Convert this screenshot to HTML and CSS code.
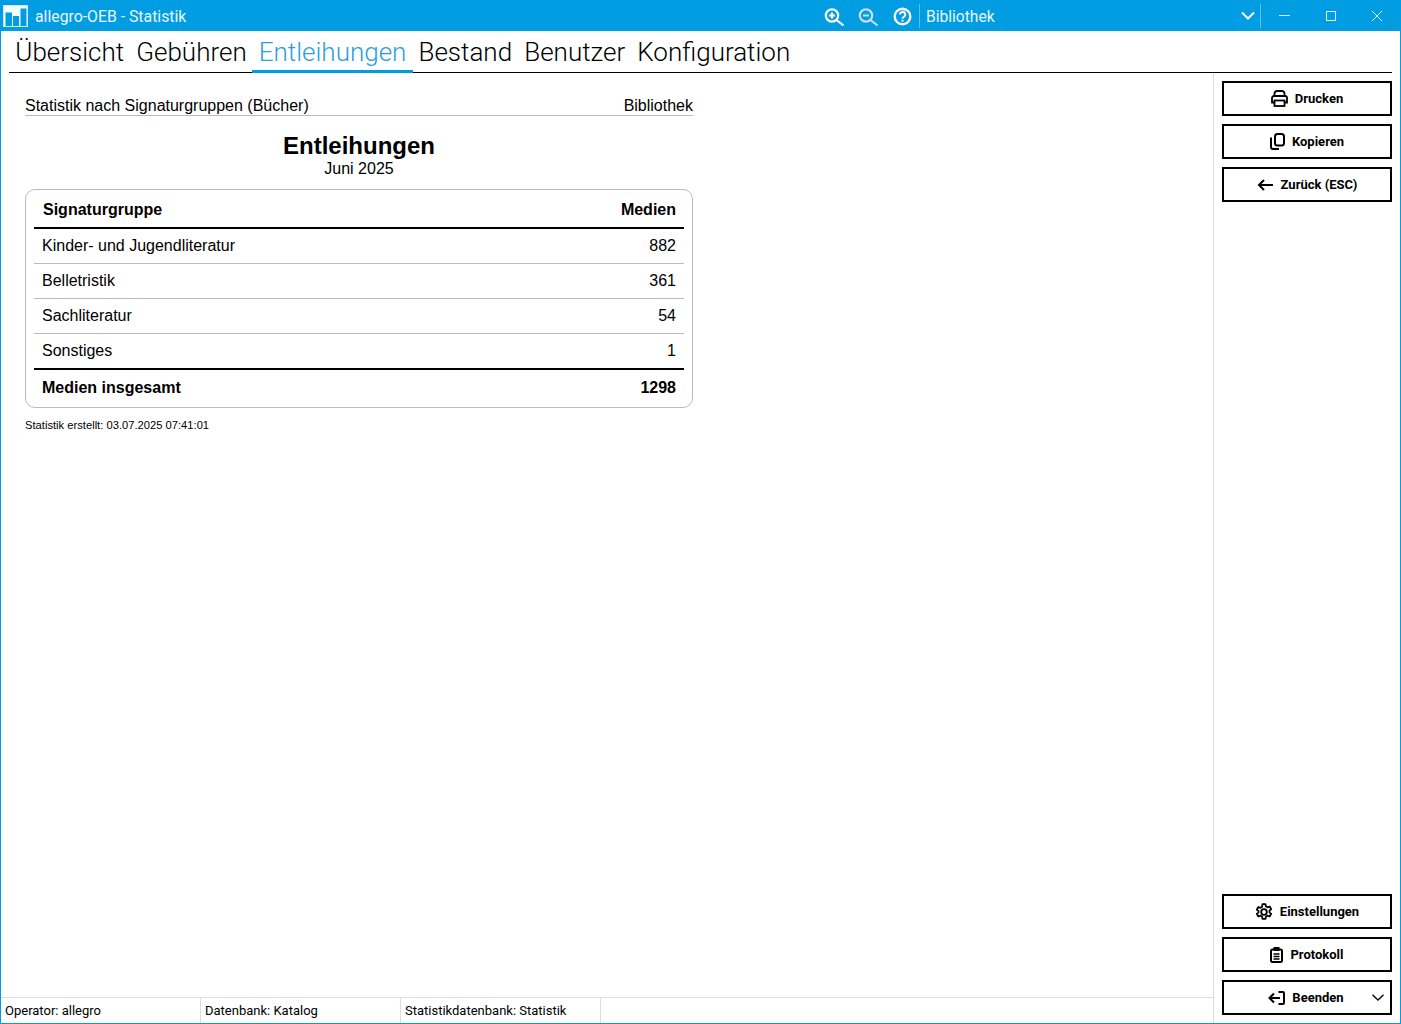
FILE: index.html
```html
<!DOCTYPE html>
<html lang="de">
<head>
  <meta charset="UTF-8">
  <title>allegro-OEB - Statistik</title>
  <link rel="stylesheet" href="styles.css">
</head>
<body>
  <div class="window">
    <!-- Titelleiste -->
    <header class="titlebar">
      <svg class="app-logo" width="26" height="23" viewBox="0 0 26 23">
        <rect x="0.500" y="0.500" width="24" height="21" fill="#f4fbfe" stroke="#cfeaf8"/>
        <rect x="2.500" y="7.500" width="6.500" height="13.500" fill="#009de2"/>
        <rect x="10" y="11" width="6" height="10" fill="#009de2"/>
        <rect x="17.500" y="3.500" width="6" height="17.500" fill="#009de2"/>
      </svg>
      <span class="app-title">allegro-OEB - Statistik</span>
      <div class="title-tools">
        <svg class="tool" width="22" height="22" viewBox="0 0 22 22" fill="none" stroke="#fff" stroke-width="2.200">
          <circle cx="8" cy="10.500" r="6.200"/><path d="M12.500 15l7 5.500M8 7.500v6M5 10.500h6"/>
        </svg>
        <svg class="tool" width="22" height="22" viewBox="0 0 22 22" fill="none" stroke="#cfdde4" stroke-width="2.200">
          <circle cx="8" cy="10.500" r="6.200"/><path d="M12.500 15l7 5.500M5 10.500h6"/>
        </svg>
        <svg class="tool" width="22" height="22" viewBox="0 0 22 22" fill="none" stroke="#fff" stroke-width="2.400">
          <circle cx="10.500" cy="11.500" r="7.800"/><path d="M8 9.500a2.600 2.600 0 1 1 3.800 2.300c-.9.500-1.300 1-1.300 1.900" stroke-width="2"/><path d="M10.500 14.800v1.800" stroke-width="2"/>
        </svg>
      </div>
      <div class="db-select">
        <span>Bibliothek</span>
        <svg width="14" height="9" viewBox="0 0 14 9" fill="none" stroke="#fff" stroke-width="2"><path d="M1 1.500l6 6 6-6"/></svg>
      </div>
      <div class="win-controls">
        <svg width="46" height="31" viewBox="0 0 46 31" fill="none" stroke="#d5eefa"><path d="M17 15.500h11"/></svg>
        <svg width="46" height="31" viewBox="0 0 46 31" fill="none" stroke="#e6f5fc"><rect x="18.500" y="11.500" width="9" height="9"/></svg>
        <svg width="46" height="31" viewBox="0 0 46 31" fill="none" stroke="#e6f5fc"><path d="M18 11l10 10M28 11 18 21"/></svg>
      </div>
    </header>

    <nav class="tabs">
      <a class="tab">Übersicht</a>
      <a class="tab">Gebühren</a>
      <a class="tab active">Entleihungen</a>
      <a class="tab">Bestand</a>
      <a class="tab">Benutzer</a>
      <a class="tab">Konfiguration</a>
    </nav>

    <div class="body">
      <div class="main">
        <section class="report">
          <div class="report-head">
            <span>Statistik nach Signaturgruppen (Bücher)</span>
            <span>Bibliothek</span>
          </div>
          <h1>Entleihungen</h1>
          <div class="period">Juni 2025</div>
          <div class="table-box">
            <table>
              <thead>
                <tr><th>Signaturgruppe</th><th class="num">Medien</th></tr>
              </thead>
              <tbody>
                <tr><td>Kinder- und Jugendliteratur</td><td class="num">882</td></tr>
                <tr><td>Belletristik</td><td class="num">361</td></tr>
                <tr><td>Sachliteratur</td><td class="num">54</td></tr>
                <tr><td>Sonstiges</td><td class="num">1</td></tr>
              </tbody>
              <tfoot>
                <tr><td>Medien insgesamt</td><td class="num">1298</td></tr>
              </tfoot>
            </table>
          </div>
          <div class="created">Statistik erstellt: 03.07.2025 07:41:01</div>
        </section>

        <footer class="statusbar">
          <div class="status-cell">Operator: allegro</div>
          <div class="status-cell">Datenbank: Katalog</div>
          <div class="status-cell">Statistikdatenbank: Statistik</div>
        </footer>
      </div>

      <aside class="sidebar">
        <div class="btn-group">
          <button class="btn">
            <svg width="17" height="17" viewBox="0 0 17 17" fill="none" stroke="#000" stroke-width="1.800"><path d="M3.500 6V3.500a2.500 2.500 0 0 1 2.500-2.500h5a2.500 2.500 0 0 1 2.500 2.500V6"/><path d="M3.500 12.500H1V8a2 2 0 0 1 2-2h11a2 2 0 0 1 2 2v4.500h-2.500"/><rect x="3.500" y="10.500" width="10" height="5.500"/></svg>
            Drucken
          </button>
          <button class="btn">
            <svg width="15" height="17" viewBox="0 0 15 17" fill="none" stroke="#000" stroke-width="2"><rect x="5" y="1" width="9" height="11.500" rx="2.500"/><path d="M1 4.500V14a2 2 0 0 0 2 2h6"/></svg>
            Kopieren
          </button>
          <button class="btn btn-back">
            <svg width="16" height="12" viewBox="0 0 16 12" fill="none" stroke="#000" stroke-width="2"><path d="M16 6H2M7 1 2 6l5 5"/></svg>
            Zurück (ESC)
          </button>
        </div>
        <div class="btn-group">
          <button class="btn">
            <svg width="18" height="18" viewBox="0 0 18 18" fill="none" stroke="#000" stroke-width="1.800"><circle cx="9" cy="9" r="2.800"/><path d="M7.500 1.200h3l.5 2.300 1.500.8 2.200-.8 1.500 2.600-1.700 1.500v1.800l1.700 1.500-1.500 2.600-2.200-.8-1.500.8-.5 2.300h-3l-.5-2.300-1.500-.8-2.200.8-1.500-2.600 1.700-1.500V8.100L1.800 6.600l1.500-2.600 2.200.8 1.500-.8z" stroke-linejoin="round"/></svg>
            Einstellungen
          </button>
          <button class="btn">
            <svg width="13" height="16" viewBox="0 0 13 16" fill="none" stroke="#000" stroke-width="2"><rect x="1" y="2.500" width="11" height="12.500" rx="1.500"/><rect x="4" y="0.500" width="5" height="3" fill="#000" stroke-width="1"/><path d="M3.500 7h6M3.500 9.500h6M3.500 12h6" stroke-width="1.500"/></svg>
            Protokoll
          </button>
          <button class="btn btn-menu">
            <svg width="17" height="14" viewBox="0 0 17 14" fill="none" stroke="#000" stroke-width="2"><path d="M10.500 1H15a1 1 0 0 1 1 1v10a1 1 0 0 1-1 1h-4.500M12 7H1.500M6 2.500 1.500 7 6 11.500"/></svg>
            Beenden
            <svg class="btn-caret" width="12" height="7" viewBox="0 0 12 7" fill="none" stroke="#000" stroke-width="1.300"><path d="M.5.700 6 6 11.500.700"/></svg>
          </button>
        </div>
      </aside>
    </div>
  </div>
</body>
</html>
```

FILE: styles.css
```css
* {
  box-sizing: border-box;
}
html, body {
  height: 100%;
  margin: 0;
}
body {
  font-family: Roboto, "Liberation Sans", sans-serif;
  color: #000;
  background: #fff;
}
.window {
  display: flex;
  flex-direction: column;
  width: 1401px;
  height: 1024px;
  border: 1px solid #009de2;
  border-top: none;
}
.titlebar {
  display: flex;
  align-items: center;
  height: 31px;
  margin: 0 -1px;
  padding-left: 3px;
  background: #009de2;
  color: #fff;
  flex-shrink: 0;
}
.app-logo {
  display: block;
  flex-shrink: 0;
  margin: 1px 6px 0 0;
}
.app-title {
  width: 789px;
  padding-top: 2px;
  font-size: 15.800px;
  color: #e8f6fd;
}
.title-tools {
  display: flex;
  gap: 12px;
  width: 96px;
  border-right: 1px solid #5fc0ec;
  height: 24px;
  align-items: center;
}
.tool {
  overflow: visible;
  flex-shrink: 0;
}
.db-select {
  display: flex;
  align-items: center;
  justify-content: space-between;
  width: 341px;
  height: 24px;
  padding: 0 5px 0 6px;
  border-right: 1px solid #5fc0ec;
  font-size: 15.600px;
  color: #e8f6fd;
}
.db-select span {
  padding-top: 2px;
}
.win-controls {
  display: flex;
  margin-left: 1px;
}
.win-controls svg {
  display: block;
}
.tabs {
  display: flex;
  flex-shrink: 0;
  height: 42px;
  margin: 0 8px;
  border-bottom: 1px solid #000;
  width: 1383px;
}
.tab {
  height: 42px;
  margin-right: -1px;
  padding: 4px 6.800px 0 6.300px;
  font-size: 26px;
  font-weight: 300;
  line-height: 34px;
  border-bottom: 3px solid transparent;
}
.tab.active {
  color: #2a9fe0;
  border-bottom-color: #009de2;
}
.body {
  display: flex;
  flex: 1;
  min-height: 0;
}
.main {
  display: flex;
  flex-direction: column;
  flex: 1;
  min-width: 0;
}
.report {
  flex: 1;
  width: 692px;
  padding: 23px 0 0 24px;
  font-family: "Liberation Sans", Arial, sans-serif;
  font-size: 16px;
}
.report-head {
  display: flex;
  justify-content: space-between;
  height: 20px;
  border-bottom: 1px solid #bbb;
  line-height: 19px;
}
.report h1 {
  margin: 15px 0 0;
  font-size: 24px;
  line-height: 29px;
  text-align: center;
}
.period {
  height: 19px;
  line-height: 17px;
  text-align: center;
}
.table-box {
  margin-top: 10px;
  padding: 0 8px;
  border: 1px solid #bbb;
  border-radius: 10px;
  height: 219px;
}
.table-box table {
  width: 100%;
  border-collapse: collapse;
}
th, td {
  padding: 0 8px;
  text-align: left;
}
th {
  height: 38px;
  padding-top: 2px;
  border-bottom: 2px solid #000;
}
thead th:first-child {
  padding-left: 9px;
}
tbody td {
  height: 35px;
  border-bottom: 1px solid #bbb;
}
tbody tr:last-child td {
  border-bottom: 2px solid #000;
  height: 36px;
}
tfoot td {
  height: 36px;
  font-weight: bold;
}
.num {
  text-align: right;
}
.created {
  margin-top: 11px;
  font-size: 11.200px;
  line-height: 13px;
}
.statusbar {
  display: flex;
  flex-shrink: 0;
  height: 26px;
  border-top: 1px solid #ddd;
  font-size: 13px;
}
.status-cell {
  width: 200px;
  padding: 5px 0 0 4px;
  border-right: 1px solid #ddd;
  line-height: 16px;
}
.sidebar {
  display: flex;
  flex-direction: column;
  justify-content: space-between;
  width: 187px;
  padding: 8px;
  border-left: 1px solid #ddd;
  flex-shrink: 0;
}
.btn-group {
  display: flex;
  flex-direction: column;
  gap: 8px;
}
.btn {
  display: flex;
  align-items: center;
  justify-content: center;
  gap: 7px;
  position: relative;
  width: 170px;
  height: 35px;
  padding: 0;
  background: #fff;
  border: 2px solid #000;
  font-family: Roboto, sans-serif;
  font-size: 13px;
  font-weight: 700;
  color: #000;
}
.btn-back {
  gap: 8px;
}
.btn-menu {
  padding-right: 2px;
}
.btn-caret {
  position: absolute;
  right: 6px;
  top: 12px;
}
```
